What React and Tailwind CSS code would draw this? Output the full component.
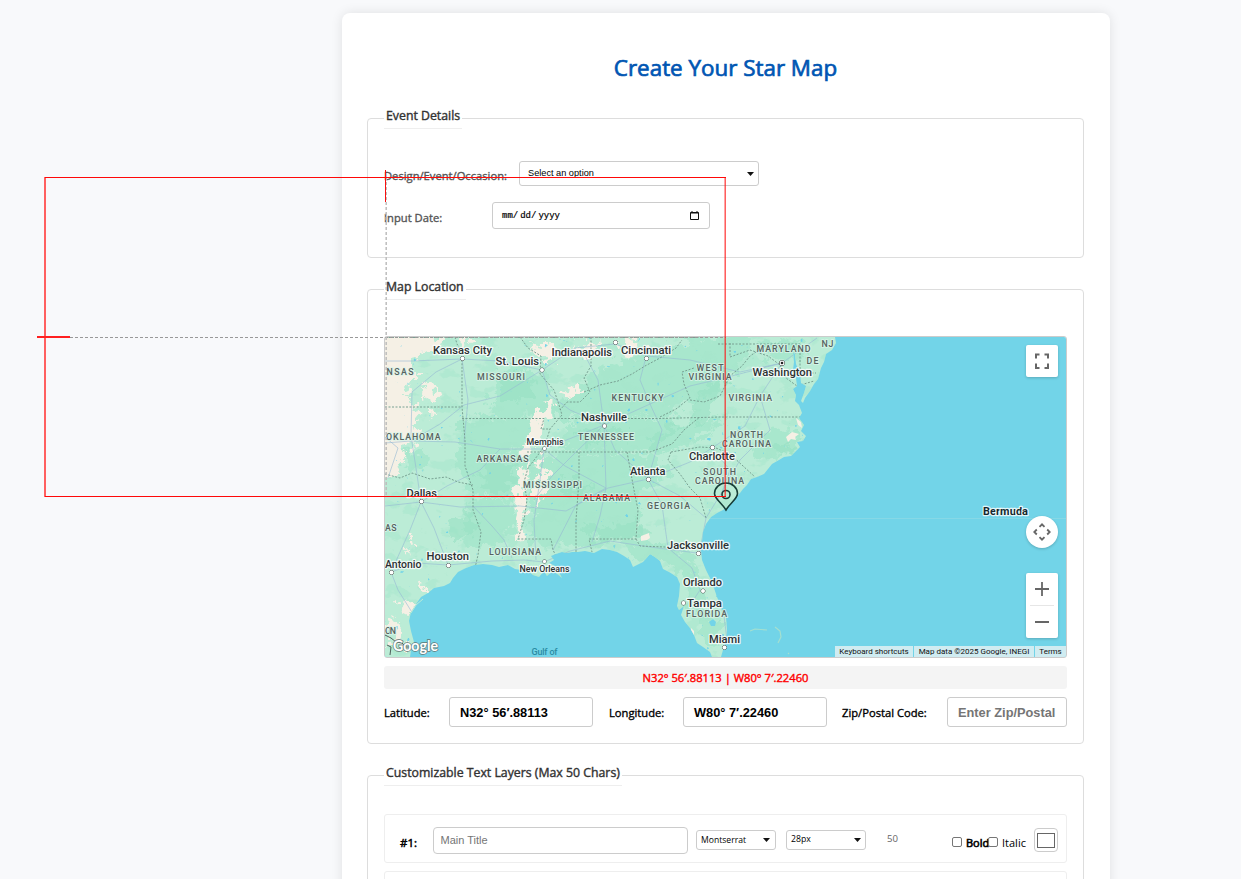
import React from "react";

const LAND =
  "M385 337H835L836 343L832 350L826 354L824 362L821 368L818 379L814 384L810 391L805 398L803 403L801 401L804 393L806 386L801 383L800 374L796 364L795 354L793 352L794 362L793 370L796 378L797 386L793 389L796 395L795 401L799 405L802 413L799 418L804 425L801 431L806 436L803 441L797 442L800 447L794 453L791 456L784 457L779 460L772 464L768 469L764 474L757 477L751 479L747 485L743 489L740 493L734 499L729 506L723 510L717 513L711 517L706 524L703 532L702 542L701 550L702 560L706 570L711 580L714 588L717 597L722 609L726 617L727 630L726 640L723 650L721 657H712L710 652L703 647L697 643L694 635L690 628L685 622L681 615L684 606L679 610L677 606L679 596L680 584L677 577L669 572L663 569L660 561L655 557L650 554L643 562L633 567L630 560L624 556L617 552L610 550L602 549L594 553L585 551L578 552L572 552L567 553L562 552L556 554L551 556L554 560L549 563L557 567L559 572L562 578L556 573L551 572L547 576L544 571L539 577L533 575L528 571L521 570L515 569L508 565L499 567L492 565L483 564L474 565L466 568L458 572L453 578L450 583L444 586L434 588L428 593L421 597L416 604L411 612L409 621L411 631L414 642L411 650L410 657H385Z";

const GREEN_PATCHES = [
  "M500 372l20 -6 26 10 6 22 -14 16 -24 6 -24 -6 2 -20z",
  "M458 420l50 -2 32 4 -10 22 -26 8 -46 -4z",
  "M450 450l40 -6 30 14 4 22 -6 18 -50 -2 -6 -26z",
  "M470 500l40 -2 6 22 -8 20 -28 8 -18 -4z",
  "M528 456l50 -4 65 2 34 18 -40 20 4 44 -60 10 -50 -2 0 -40z",
  "M598 368l44 -14 50 -16 60 -2 -6 26 -36 34 -50 20 -60 2 -50 0 14 -22z",
  "M568 420l60 -2 50 0 -12 28 -50 6 -56 -2z",
  "M646 440l40 -20 40 -4 -30 28 -36 10 -24 -4z",
  "M760 432l28 -4 14 10 -14 16 -32 6z",
  "M650 556l20 -10 22 12 10 30 10 30 -8 8 -14 -20 -10 -34z",
  "M622 540l48 4 0 18 -36 4z",
  "M760 342l40 -2 6 20 -40 -2z",
  "M400 452l20 -4 12 14 -24 10z",
  "M700 620l20 0 6 20 -12 8 -14 -14z",
];

const DEEP_PATCHES = [
  "M500 378l22 -4 14 12 -12 14 -20 2z",
  "M484 456l22 4 10 18 -10 14 -24 -4z",
  "M446 520l26 -6 6 16 -24 10z",
  "M560 480l24 2 6 10 -26 4z",
  "M580 528l60 -4 10 10 -60 6z",
  "M696 400l24 -26 8 2 -20 36 -16 14z",
  "M646 442l32 -22 6 4 -36 28z",
  "M776 446l18 -2 2 6 -16 6z",
  "M578 430l50 -2 0 8 -44 8z",
];

const TAN_PATCHES = [
  "M375 330h42l16 4 14 8 -16 12 -16 4 0 22 -8 16 10 16 2 24 -12 12 -8 14 -10 8 -14 10z",
  "M378 440l16 4 6 14 -4 16 -16 4z",
  "M416 336l24 2 4 6 -20 8z",
  "M424 386l14 2 -6 10 -10 2z",
  "M425 406l12 4 -5 10z",
  "M456 336l16 0 -6 12z",
  "M550 400l6 6 -10 16 -9 24 -11 14 2 26 -12 14 2 -28 6 -16 -5 -12 14 -16 4 -18z",
  "M518 494l10 4 -5 20 3 14 -11 14 0 -28z",
  "M535 490l8 -20 6 -4 -4 26 -9 12z",
  "M541 454l6 2 -4 14 -5 -2z",
  "M528 344l12 4 10 -4 8 12 -14 6z",
  "M572 342l12 4 18 -6 -6 16 -18 2z",
  "M560 388l12 2 6 -6 4 6 -14 10z",
  "M622 338l14 2 6 10 -14 6 -8 -8z",
  "M402 606l14 -4 2 8 -10 8z",
  "M409 538l7 2 -5 12z",
  "M421 582l7 4 0 10 -6 -2z",
  "M386 616l10 2 8 20 -14 8z",
  "M400 640l8 2 0 8 -8 -2z",
];

const CLEAN_TAN = [
  "M641 536l8 -3 1 5 -3 2 -6 1z",
  "M786 437l6 -5 7 2 -4 3 1 3 -5 -1 -3 3z",
  "M796 418l5 4 1 6 -4 -3z",
  "M691 628l3 3 0 5 -3 -3z",
];

const ROADS = [
  "M385 361H412L462 359L500 361L542 370L575 348L615 344L647 356L690 360L740 372L782 363L817 338",
  "M462 359L436 372L412 392L411 436L416 468L421 502L410 530L391 572L398 590L420 625",
  "M385 443L411 441L440 424L464 405L500 396L542 370",
  "M411 441L455 442L500 449L544 449L604 425L650 404L690 386L724 378L782 363",
  "M421 502L447 486L480 470L500 449",
  "M421 502L460 507L520 506L566 511L608 488L648 479L690 462L712 448L745 426L760 396L782 363",
  "M385 506L421 502L434 528L448 565L492 561L524 560L544 562L570 551L610 541L650 547L697 553",
  "M448 565L417 563L391 572",
  "M544 449L540 480L534 520L536 560",
  "M604 425L576 452L552 476L534 500",
  "M604 425L615 450L648 479L662 505L668 548",
  "M646 357L640 380L650 404L662 430L648 479",
  "M542 370L550 395L570 410L604 425L598 380L582 350",
  "M648 479L680 496L706 518L700 550L714 584L724 616L727 640",
  "M690 605L700 590L692 568L668 548",
  "M712 448L730 470L722 492L706 518",
  "M760 396L770 430L740 460L722 492",
  "M385 437L398 448L388 478",
  "M473 506L492 526L504 540L512 558",
  "M604 425L606 488L576 505L553 550",
  "M544 449L565 466L606 488L600 516L592 542",
  "M462 359L468 400L464 442",
];

const BORDERS = [
  "M385 337.500H640L700 337.500",
  "M385 407H462",
  "M455 337L457 344L462 352V407L465 440V466L473 490V510L481 532L478 555L475 568",
  "M462 418.500H544L541 429H550",
  "M385 474L400 478L412 473L430 479L446 477L458 482L473 485",
  "M520 337L528 348L541 356L540 374L554 390L559 405L562 415L550 429L545 445L538 455L528 468L524 482L527 500L524 520L518 539H551L553 550L556 556",
  "M591 337V366L584 378L590 392L580 402L567 402L560 410",
  "M584 392L600 385L618 381L632 374L645 366L660 358L676 348L682 340",
  "M554 418.500H660L720 417L805 417",
  "M527 452H650L672 444L684 430L696 420L700 417",
  "M579 452V480L576 520V557",
  "M627 452L634 490L638 510L636 539H589L592 552",
  "M636 539L640 546L690 548L692 550",
  "M671 452L668 460L680 474L690 488L700 498L706 518",
  "M671 452L700 447L716 448L730 454L755 477",
  "M660 417L676 409L690 398L684 384L682 372L694 368",
  "M690 400L704 402L720 396L730 376L742 366L750 356L765 346",
  "M718 344H800V373H816",
  "M730 343V357L750 350L768 356L780 365L786 378L797 386L814 381",
];

const STATES = [
  ["NSAS", 386.5, 375, 27], ["MISSOURI", 477, 380, 48], ["KENTUCKY", 611.5, 401, 52], ["VIRGINIA", 728.5, 401, 43.5],
  ["WEST", 696.5, 371, 27], ["VIRGINIA", 688.5, 380, 43], ["MARYLAND", 756.5, 352, 54], ["DE", 806.5, 364, 12], ["NJ", 821.5, 346.5, 12],
  ["OKLAHOMA", 386, 439.5, 54.5], ["ARKANSAS", 476.5, 461.5, 52], ["TENNESSEE", 578, 439.5, 56],
  ["NORTH", 730, 437.5, 33], ["CAROLINA", 722, 446.5, 49], ["SOUTH", 703, 475, 33], ["CAROLINA", 695, 484, 49],
  ["MISSISSIPPI", 523, 488, 59], ["ALABAMA", 583, 501, 47], ["GEORGIA", 647, 508.5, 43], ["LOUISIANA", 489, 555, 52],
  ["FLORIDA", 686, 617, 41], ["AS", 385, 531, 11.5], ["ON", 385, 634, 11],
];

const CITIES = [
  ["Kansas City", 433, 354, 59, 462.5, 358.5], ["St. Louis", 495.5, 365, 43.5, 542, 370],
  ["Indianapolis", 551.5, 355.5, 60.5, 615.5, 342.5], ["Cincinnati", 621, 354, 50, 646.5, 358.5],
  ["Washington", 752.5, 376, 59.5, 782, 363], ["Nashville", 581, 421, 46, 604.5, 426],
  ["Charlotte", 689, 460, 46, 712.5, 447.5], ["Atlanta", 630, 475, 35.5, 648.5, 479.5],
  ["Dallas", 406.5, 496.5, 30.5, 421.5, 501.5], ["Houston", 426.5, 560, 42.5, 448.5, 565.5],
  ["Antonio", 385, 568, 36.5, 391.5, 572.5], ["Jacksonville", 667, 548.5, 62, 698.5, 553.5],
  ["Orlando", 683, 586, 39, 703, 591], ["Tampa", 687, 607, 35, 683.5, 603],
  ["Miami", 709, 643, 31, 724.5, 647.5],
];

const PIN = "M726 510C722 503 714.500 499 714.500 493.500A11.500 10.500 0 0 1 737.500 493.500C737.500 499 730 503 726 510Z";

function MapDrawing() {
  return (
    <svg className="block h-[320px] w-[681px]" viewBox="385 337 681 320">
      <defs>
        <clipPath id="land"><path d={LAND} /></clipPath>
        <filter id="ragged" x="-10%" y="-10%" width="120%" height="120%" colorInterpolationFilters="sRGB">
          <feTurbulence type="fractalNoise" baseFrequency="0.1" numOctaves="4" seed="4" />
          <feDisplacementMap in="SourceGraphic" scale="26" xChannelSelector="R" yChannelSelector="G" />
        </filter>
        <filter id="speckle" x="0" y="0" width="100%" height="100%" colorInterpolationFilters="sRGB">
          <feTurbulence type="fractalNoise" baseFrequency="0.05 0.07" numOctaves="4" seed="11" />
          <feColorMatrix values="0 0 0 0 0.65  0 0 0 0 0.9  0 0 0 0 0.8  12 0 0 0 -6.9" />
        </filter>
        <filter id="lakes" x="0" y="0" width="100%" height="100%" colorInterpolationFilters="sRGB">
          <feTurbulence type="fractalNoise" baseFrequency="0.16" numOctaves="2" seed="23" />
          <feColorMatrix values="0 0 0 0 0.44  0 0 0 0 0.83  0 0 0 0 0.91  0 14 0 0 -10.9" />
        </filter>
      </defs>
      <rect x="385" y="337" width="681" height="320" fill="#72d4e8" />
      <path d="M706 518.500H1066" stroke="#86d8e6" strokeWidth="1" />
      <path d={LAND} fill="#bbecd6" />
      <g clipPath="url(#land)">
        <g filter="url(#ragged)" fill="#a8e7cd">
          {GREEN_PATCHES.map((d, i) => <path key={i} d={d} />)}
        </g>
        <rect x="385" y="337" width="460" height="320" filter="url(#speckle)" opacity=".5" />
        <g filter="url(#ragged)" fill="#98e1c3" fillOpacity=".6">
          {DEEP_PATCHES.map((d, i) => <path key={i} d={d} />)}
        </g>
        <g filter="url(#ragged)" fill="#f5f0e5">
          {TAN_PATCHES.map((d, i) => <path key={i} d={d} />)}
        </g>
        <g fill="#f5f0e5">
          {CLEAN_TAN.map((d, i) => <path key={i} d={d} />)}
        </g>
        <rect x="385" y="337" width="460" height="320" filter="url(#lakes)" />
        <path d="M709 622l4 -3 3 3 -1 4 -4 0z" fill="#72d4e8" />
        <g fill="none" stroke="#96b9d4" strokeOpacity=".6" strokeWidth="1" strokeLinejoin="round">
          {ROADS.map((d, i) => <path key={i} d={d} />)}
        </g>
        <g fill="none" stroke="#78a092" strokeWidth="1" strokeDasharray="2 1.500">
          {BORDERS.map((d, i) => <path key={i} d={d} />)}
        </g>
      </g>
      <path d="M411 613q4 -9 12 -14" stroke="#bbecd6" fill="none" />
      <path d="M750 631l5 -2 12 1M775 627l5 4 1 6 -3 6M788 653l1 1" stroke="#a5dfcf" strokeWidth="1.200" fill="none" />
      <path d="M385 635l6 3 5 4 6 1 4 4 8 0M387 645l4 2 -1 8" stroke="#4e5f5a" fill="none" strokeWidth="1" />
      <g fontFamily="Roboto, sans-serif" paintOrder="stroke" strokeLinejoin="round">
        <g fontSize="8.800" fontWeight="500" fill="#56625f" stroke="#d9f4e8" strokeOpacity=".8" strokeWidth="2">
          {STATES.map(([t, x, y, w], i) => (
            <text key={i} x={x} y={y} textLength={w}>{t}</text>
          ))}
        </g>
        <g fill="#fff" stroke="#444" strokeWidth="1">
          {CITIES.map(([t, , , , x, y]) => <circle key={t} cx={x} cy={y} r="2" />)}
          <circle cx="544.500" cy="448.500" r="1.700" />
          <circle cx="544.500" cy="561.500" r="1.700" />
        </g>
        <circle cx="782" cy="363" r="2.500" fill="#fff" stroke="#222" />
        <circle cx="782" cy="363" r="1.300" fill="#222" />
        <g fontSize="11" fontWeight="500" fill="#2c3133" stroke="#fff" strokeOpacity=".8" strokeWidth="2.400">
          {CITIES.map(([t, x, y, w]) => (
            <text key={t} x={x} y={y} textLength={w} lengthAdjust="spacingAndGlyphs">{t}</text>
          ))}
          <text x="526.500" y="445" fontSize="9.200" textLength="37" lengthAdjust="spacingAndGlyphs">Memphis</text>
          <text x="519.500" y="571.500" fontSize="9.200" textLength="50" lengthAdjust="spacingAndGlyphs">New Orleans</text>
          <text x="983" y="514.500" fontSize="11" fontWeight="700" fill="#15282e" textLength="45">Bermuda</text>
        </g>
        <text x="531.500" y="655" fontSize="9" fontWeight="500" fill="#2b8ba3" textLength="26">Gulf of</text>
      </g>
      <text x="393" y="651" fontFamily="Lato, sans-serif" fontSize="15" fontWeight="700" fill="#fff" stroke="#637b78" strokeOpacity=".85" strokeWidth="1.800" paintOrder="stroke" textLength="45" lengthAdjust="spacingAndGlyphs">Google</text>
      <g fill="none" stroke="#173d37" strokeWidth="1.600">
        <path d={PIN} />
        <circle cx="726" cy="494.500" r="4" />
      </g>
    </svg>
  );
}

function Guides() {
  return (
    <svg className="pointer-events-none absolute left-0 top-0 h-[879px] w-[1241px]" viewBox="0 0 1241 879" fill="none">
      <path d="M45 337.500H726" stroke="#999" strokeDasharray="3 2" />
      <path d="M386.200 177V497" stroke="#bdbdbd" strokeWidth="1.500" strokeDasharray="3 2" />
      <path d="M45 177V497" stroke="#ff6060" strokeWidth="2" />
      <path d="M725.200 177V497" stroke="#ff1010" strokeOpacity=".75" strokeWidth="1.400" />
      <rect x="45" y="177" width="681" height="1" fill="#ff0808" />
      <rect x="45" y="496" width="681" height="1" fill="#ff0808" />
      <path d="M37 337H70" stroke="#ff2020" strokeWidth="2" />
      <rect x="385" y="170" width="1" height="32" fill="#f81010" />
    </svg>
  );
}

function Section({ title, className, legendClass = "h-[21px] leading-[15px]", children }) {
  return (
    <fieldset className={`rounded-[4px] border border-[#ddd] px-4 ${className}`}>
      <legend className={`border-b border-[#eee] px-0.5 text-[12.3px] text-[#333] [-webkit-text-stroke:0.4px_#333] ${legendClass}`}>
        {title}
      </legend>
      {children}
    </fieldset>
  );
}

function Caret() {
  return <svg className="h-1 w-[7px] shrink-0" viewBox="0 0 7 4"><path d="M0 0h7L3.500 4z" fill="#111" /></svg>;
}

function Dropdown({ text, className }) {
  return (
    <button className={`flex items-center justify-between rounded-[3px] border border-[#ccc] bg-white text-black ${className}`}>
      <span>{text}</span>
      <Caret />
    </button>
  );
}

const label = "text-[11.2px] leading-[16px] [-webkit-text-stroke:0.35px_currentColor]";
const coord = "flex h-[30px] items-center rounded-[3px] border border-[#ccc] bg-white px-2.5 pt-px font-['Liberation_Sans',Arial,sans-serif] text-[12.8px] font-bold";

export default function App() {
  return (
    <div className="relative h-[879px] w-[1241px] overflow-hidden bg-[#f8f9fb] pl-[342px] pt-[13px] font-['Open_Sans',sans-serif]">
      <main className="h-[900px] w-[768px] rounded-lg bg-white pl-[25px] pr-[26px] shadow-[0_0_12px_rgba(0,0,0,0.1)]">
        <h1 className="h-[95px] pt-[38px] text-center text-[22.4px] leading-[34px] text-[#0056b3] [-webkit-text-stroke:0.7px_#0056b3]">
          Create Your Star Map
        </h1>

        <Section title="Event Details" className="h-[150px]">
          <div className="flex h-[57px] items-end">
            <span className={`mb-0.5 w-[135px] text-[#555] ${label}`}>Design/Event/Occasion:</span>
            <Dropdown text="Select an option" className="h-[25px] w-[240px] pl-2 pr-1 font-['Liberation_Sans',Arial,sans-serif] text-[9.2px]" />
          </div>
          <div className="mt-4 flex h-[27px] items-center">
            <span className={`w-[108px] pt-1 text-[#555] ${label}`}>Input Date:</span>
            <div className="flex h-[27px] w-[218px] items-center justify-between rounded-[3px] border border-[#ccc] pl-[9px] pr-2.5 font-['Liberation_Mono',monospace] text-[9px] text-black">
              <span className="flex gap-0.5 pt-0.5 [-webkit-text-stroke:0.2px_#000]"><span>mm/</span><span>dd/</span><span>yyyy</span></span>
              <svg className="h-[9px] w-[9px]" viewBox="0 0 9 9" fill="none" stroke="#111"><path d="M.5 1.500h8v7h-8zM.5 2h8M2 0v2M7 0v2" /></svg>
            </div>
          </div>
        </Section>

        <Section title="Map Location" className="mt-[21px] h-[465px]">
          <div className="relative mt-9 h-[322px] w-[683px] overflow-hidden rounded-[3px] border border-[#ccc]">
            <MapDrawing />
            <button className="absolute right-2 top-2 flex h-8 w-8 items-center justify-center rounded-[2px] bg-white shadow-[0_1px_3px_rgba(0,0,0,0.2)]">
              <svg className="h-4 w-4" viewBox="0 0 16 16" fill="none" stroke="#666" strokeWidth="2"><path d="M5.500 1.500H2V5.500M10.500 1.500H14V5.500M5.500 15H2V10.500M10.500 15H14V10.500" /></svg>
            </button>
            <button className="absolute right-2 top-[179px] flex h-8 w-8 items-center justify-center rounded-full bg-white shadow-[0_1px_3px_rgba(0,0,0,0.2)]">
              <svg className="h-[18px] w-[18px]" viewBox="0 0 18 18" fill="none" stroke="#666" strokeWidth="1.800"><path d="M6.500 3.800L9 1.300L11.500 3.800M6.500 14.200L9 16.700L11.500 14.200M3.800 6.500L1.300 9L3.800 11.500M14.200 6.500L16.700 9L14.200 11.500" /></svg>
            </button>
            <div className="absolute right-2 top-[236px] flex h-[65px] w-8 flex-col items-center rounded-[2px] bg-white shadow-[0_1px_3px_rgba(0,0,0,0.2)]">
              <button className="flex h-8 w-8 items-center justify-center"><svg className="h-3.5 w-3.5" viewBox="0 0 14 14" stroke="#666" strokeWidth="1.800"><path d="M0 7h14M7 0v14" /></svg></button>
              <span className="h-px w-6 bg-[#e6e6e6]" />
              <button className="flex h-8 w-8 items-center justify-center"><svg className="h-3.5 w-3.5" viewBox="0 0 14 14" stroke="#666" strokeWidth="1.800"><path d="M0 7h14" /></svg></button>
            </div>
            <div className="absolute bottom-0 right-0 flex h-[11px] gap-px font-['Roboto',sans-serif] text-[8px] leading-[11px] text-[#111]">
              <span className="w-[78px] whitespace-nowrap bg-[#d0ecf1] text-center">Keyboard shortcuts</span>
              <span className="w-[120px] whitespace-nowrap bg-[#d0ecf1] text-center">Map data ©2025 Google, INEGI</span>
              <span className="w-[31px] bg-[#d0ecf1] text-center">Terms</span>
            </div>
          </div>
          <div className="mt-2 h-[23px] rounded-[3px] bg-[#f4f4f4] text-center text-[11.2px] leading-[24px] text-[#f00] [-webkit-text-stroke:0.4px_#f00]">
            N32° 56′.88113 | W80° 7′.22460
          </div>
          <div className="mt-2 flex items-center">
            <span className={`w-[65px] pt-0.5 text-black ${label}`}>Latitude:</span>
            <div className={`w-[144px] ${coord}`}>N32° 56′.88113</div>
            <span className={`ml-4 w-[74px] pt-0.5 text-black ${label}`}>Longitude:</span>
            <div className={`w-[144px] ${coord}`}>W80° 7′.22460</div>
            <span className={`ml-[15px] w-[105px] pt-0.5 text-black ${label}`}>Zip/Postal Code:</span>
            <div className={`w-[120px] whitespace-nowrap text-[#757575] ${coord}`}>Enter Zip/Postal</div>
          </div>
        </Section>

        <Section title="Customizable Text Layers (Max 50 Chars)" className="mt-5 h-[200px]" legendClass="h-[22px] leading-[17px]">
          <div className="mt-[28px] flex h-[49px] items-center rounded-[3px] border border-[#eee] pl-[15px] pr-2">
            <span className="w-[33px] shrink-0 pt-2 text-[11.5px] leading-4 text-black [-webkit-text-stroke:0.5px_#000]">#1:</span>
            <div className="mt-1 flex h-[27px] w-[255px] shrink-0 items-center rounded-[4px] border border-[#ccc] px-[6.5px] font-['Liberation_Sans',Arial,sans-serif] text-[11px] text-[#757575]">Main Title</div>
            <Dropdown text="Montserrat" className="ml-2 mt-[3px] h-5 w-20 shrink-0 pl-1 pr-[5px] text-[8.6px]" />
            <Dropdown text="28px" className="ml-2.5 mt-[3px] h-5 w-20 shrink-0 pl-1 pr-1 text-[8.7px]" />
            <span className="ml-[21px] w-[65px] text-[9.6px] leading-4 text-[#666]">50</span>
            <span className="mt-[7px] h-2.5 w-2.5 shrink-0 rounded-[2px] border border-[#767676]" />
            <span className="ml-1 mt-2 w-[22px] shrink-0 text-[11px] leading-4 text-black [-webkit-text-stroke:0.6px_#000]">Bold</span>
            <span className="mt-[7px] h-2.5 w-2.5 shrink-0 rounded-[2px] border border-[#767676]" />
            <span className="ml-1 mt-2 w-8 shrink-0 text-[11px] leading-4 text-black">Italic</span>
            <span className="mt-[3px] flex h-6 w-6 shrink-0 items-center justify-center rounded-[4px] border border-[#ccc]">
              <span className="h-[15px] w-[18px] border border-[#666] bg-white" />
            </span>
          </div>
          <div className="mt-2 h-[49px] rounded-[3px] border border-[#eee]" />
        </Section>
      </main>
      <Guides />
    </div>
  );
}
